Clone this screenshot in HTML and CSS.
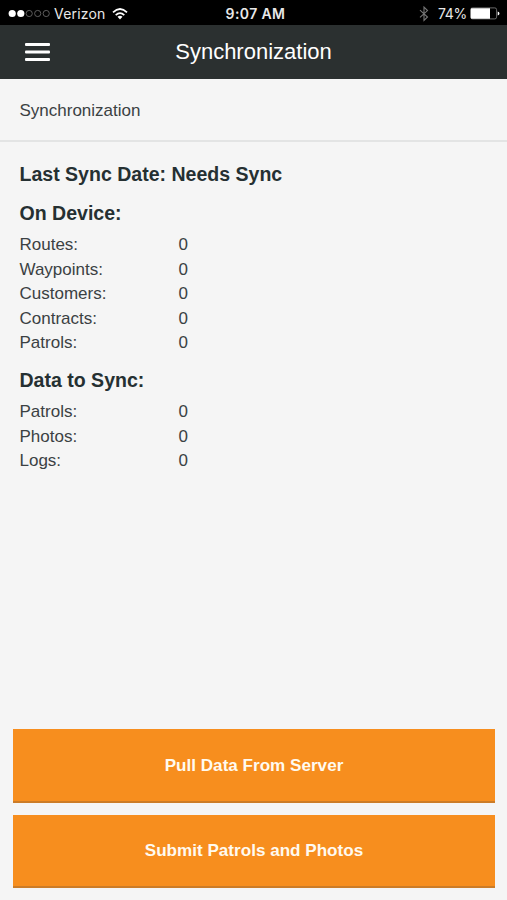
FILE: index.html
```html
<!DOCTYPE html>
<html lang="en">
<head>
<meta charset="utf-8">
<title>Synchronization</title>
<link rel="stylesheet" href="styles.css">
</head>
<body>
<div class="status">
  <div class="carrier">
    <svg class="signal" width="42" height="10" viewBox="0 0 42 10">
      <g fill="#fff"><circle cx="4.2" cy="4.5" r="3.6"/><circle cx="12.8" cy="4.5" r="3.6"/></g>
      <g fill="none" stroke="#666" stroke-width=".9"><circle cx="21.2" cy="4.5" r="3.1"/><circle cx="29.7" cy="4.5" r="3.1"/><circle cx="38.2" cy="4.5" r="3.1"/></g>
    </svg>
    <span class="network">Verizon</span>
    <svg class="wifi" width="16" height="12" viewBox="0 0 16 12">
      <g fill="none" stroke="#fff" stroke-width="1.7"><path d="M1 4.3Q8-2.3 15 4.3"/><path d="M3.7 7.1Q8 3 12.3 7.1"/></g>
      <path fill="#fff" d="M5.5 8.8Q8 6.7 10.5 8.8L8 11.4Z"/>
    </svg>
  </div>
  <span class="time">9:07 AM</span>
  <div class="power">
    <svg class="bluetooth" width="10" height="16" viewBox="0 0 10 16"><path fill="none" stroke="#777" stroke-width="1.1" d="M1 4.2L8.5 11L5 14.5V1.1L8.5 4.6L1 11.4"/></svg>
    <span class="percent">74%</span>
    <svg class="battery" width="30" height="13" viewBox="0 0 30 13">
      <rect x=".6" y=".9" width="26" height="11" rx="1.8" fill="none" stroke="#777" stroke-width=".9"/>
      <path fill="#fff" d="M1.8 1.2H20V11.7H1.8Q.8 11.7.8 10.7V2.2Q.8 1.2 1.8 1.2ZM27.7 4.5Q29.5 5 29.5 6.4T27.7 8.4Z"/>
    </svg>
  </div>
</div>
<header class="bar">
  <svg class="menu" width="25" height="20" viewBox="0 0 25 20"><g fill="#fff"><rect y="1" width="25" height="3" rx="1"/><rect y="8.5" width="25" height="3" rx="1"/><rect y="16" width="25" height="3" rx="1"/></g></svg>
  <h1>Synchronization</h1>
</header>
<div class="subtitle">Synchronization</div>
<main>
  <h2 class="last">Last Sync Date: Needs Sync</h2>
  <h2>On Device:</h2>
  <dl>
    <dt>Routes:</dt><dd>0</dd>
    <dt>Waypoints:</dt><dd>0</dd>
    <dt>Customers:</dt><dd>0</dd>
    <dt>Contracts:</dt><dd>0</dd>
    <dt>Patrols:</dt><dd>0</dd>
  </dl>
  <h2>Data to Sync:</h2>
  <dl>
    <dt>Patrols:</dt><dd>0</dd>
    <dt>Photos:</dt><dd>0</dd>
    <dt>Logs:</dt><dd>0</dd>
  </dl>
</main>
<div class="actions">
  <button type="button">Pull Data From Server</button>
  <button type="button">Submit Patrols and Photos</button>
</div>
</body>
</html>
```
FILE: styles.css
```css
* { box-sizing: border-box; margin: 0; padding: 0; }
body {
  height: 900px;
  display: flex;
  flex-direction: column;
  overflow: hidden;
  background: #f5f5f5;
  color: #3b4143;
  font-family: "Liberation Sans", Arial, sans-serif;
  font-size: 17px;
}
svg { display: block; flex: none; }
.status {
  height: 25px;
  padding: 2px 7px 0 8px;
  display: grid;
  grid-template-columns: 1fr auto 1fr;
  align-items: center;
  background: #000;
  color: #e8e8e8;
  font: 14px/22px Inter, sans-serif;
}
.carrier, .power { display: flex; align-items: center; }
.network { margin-left: 4px; letter-spacing: .2px; }
.wifi { margin-left: 6px; }
.time { padding-left: 3px; font-weight: 600; letter-spacing: .4px; }
.power { justify-content: flex-end; }
.bluetooth { margin-right: 9px; }
.percent { margin-right: 3px; letter-spacing: -.3px; }
.bar {
  height: 54px;
  padding: 0 25px;
  display: grid;
  grid-template-columns: 25px 1fr 25px;
  align-items: center;
  background: #2b3030;
  color: #fff;
}
h1 { text-align: center; font-size: 22px; font-weight: 400; line-height: 54px; }
.subtitle {
  height: 63px;
  padding: 1px 0 0 19.5px;
  border-bottom: 2px solid #e3e4e4;
  line-height: 62px;
}
main { flex: 1; padding: 20px 19.5px 0; }
h2 { margin-bottom: 7px; font-size: 19.55px; line-height: 25px; color: #253032; }
.last { margin-bottom: 14px; }
dl {
  display: grid;
  grid-template-columns: 159px 1fr;
  grid-auto-rows: 24.5px;
  line-height: 24.5px;
  margin-bottom: 12.5px;
}
.actions { padding: 0 12px 12px 13px; display: grid; gap: 12px; }
button {
  height: 73.5px;
  padding-top: 2px;
  border: 0;
  border-bottom: 2px solid #cc7c27;
  background: #f78e1e;
  color: #fffaf0;
  font: bold 17.1px "Liberation Sans", Arial, sans-serif;
}
```
